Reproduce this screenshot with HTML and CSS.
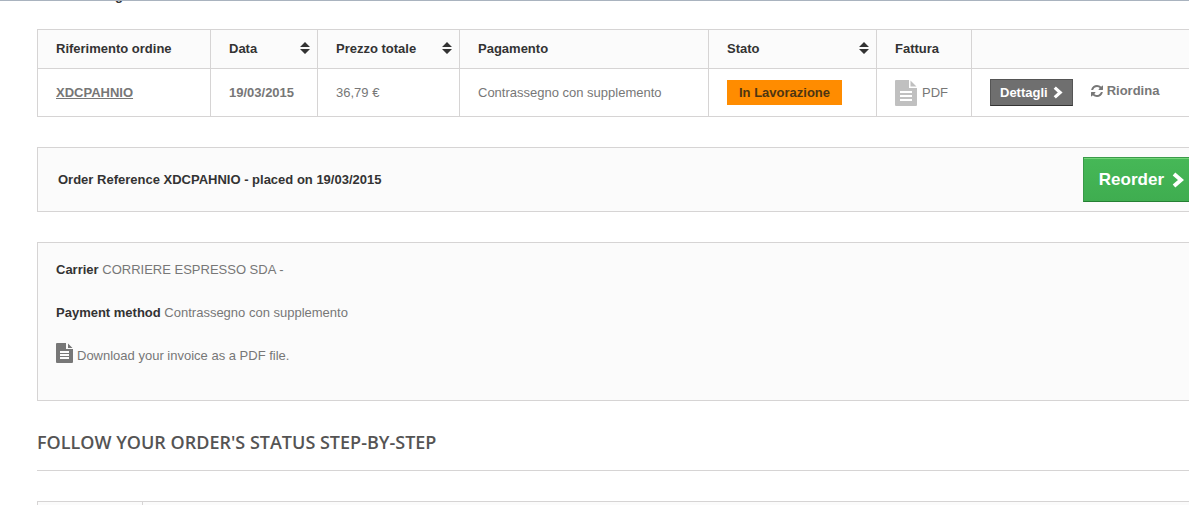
FILE: index.html
```
<!DOCTYPE html>
<html lang="it">
<head>
    <meta charset="UTF-8">
    <meta name="viewport" content="width=device-width, initial-scale=1.0">
    <title>Storico ordini</title>
    <link rel="stylesheet" href="styles.css">
</head>
<body>

    <div class="top-text">g</div>

    <main class="page">
        <table class="order-list">
            <colgroup>
                <col class="col-reference">
                <col class="col-date">
                <col class="col-price">
                <col class="col-payment">
                <col class="col-state">
                <col class="col-invoice">
                <col>
            </colgroup>
            <thead>
                <tr>
                    <th>Riferimento ordine</th>
                    <th><div class="sortable">Data <svg class="sort-icon" viewBox="0 0 10 12"><path d="M5 0 10 5H0zM0 7h10L5 12z"/></svg></div></th>
                    <th><div class="sortable">Prezzo totale <svg class="sort-icon" viewBox="0 0 10 12"><path d="M5 0 10 5H0zM0 7h10L5 12z"/></svg></div></th>
                    <th>Pagamento</th>
                    <th><div class="sortable">Stato <svg class="sort-icon" viewBox="0 0 10 12"><path d="M5 0 10 5H0zM0 7h10L5 12z"/></svg></div></th>
                    <th>Fattura</th>
                    <th></th>
                </tr>
            </thead>
            <tbody>
                <tr>
                    <td><a class="order-link" href="#">XDCPAHNIO</a></td>
                    <td class="bold">19/03/2015</td>
                    <td>36,79 €</td>
                    <td>Contrassegno con supplemento</td>
                    <td><span class="label">In Lavorazione</span></td>
                    <td>
                        <a class="pdf-link" href="#">
                            <svg class="file-icon-large" viewBox="0 0 22 26"><path fill-rule="evenodd" d="M1 0H14V8H22V25Q22 26 21 26H1Q0 26 0 25V1Q0 0 1 0zM5 11V13H17V11zM5 15V17H17V15zM5 19V21H17V19zM15.500 0.500 21.500 6.500H15.500z"/></svg>
                            PDF
                        </a>
                    </td>
                    <td>
                        <div class="actions">
                            <button type="button" class="details-btn">Dettagli
                                <svg class="chevron-small" viewBox="0 0 9 12"><path d="M1.500 1.500 6.500 6 1.500 10.500"/></svg>
                            </button>
                            <a class="reorder-link" href="#">
                                <svg class="refresh-icon" viewBox="0 0 1536 1536"><path d="M1511 928q0 5-1 7-64 268-268 434.500T764 1536q-146 0-282.500-55T238 1324l-129 129q-19 19-45 19t-45-19-19-45V960q0-26 19-45t45-19h448q26 0 45 19t19 45-19 45l-137 137q71 66 161 102t187 36q134 0 250-65t186-179q11-17 53-117 8-23 30-23h192q13 0 22.500 9.500t9.500 22.500zm25-800v448q0 26-19 45t-45 19h-448q-26 0-45-19t-19-45 19-45l138-138Q969 256 768 256q-134 0-250 65T332 500q-11 17-53 117-8 23-30 23H50q-13 0-22.500-9.500T18 608v-7q65-268 270-434.500T768 0q146 0 284 55.500T1297 212l130-129q19-19 45-19t45 19 19 45z"/></svg>
                                Riordina
                            </a>
                        </div>
                    </td>
                </tr>
            </tbody>
        </table>

        <section class="box reorder-box">
            <p class="dark">Order Reference XDCPAHNIO - placed on 19/03/2015</p>
            <button type="button" class="reorder-btn">Reorder
                <svg class="chevron-large" viewBox="0 0 12 16"><path d="M2 2 9 8 2 14"/></svg>
            </button>
        </section>

        <section class="box info-box">
            <p><strong class="dark">Carrier</strong> CORRIERE ESPRESSO SDA -</p>
            <p><strong class="dark">Payment method</strong> Contrassegno con supplemento</p>
            <p>
                <a class="invoice-link" href="#">
                    <svg class="file-icon" viewBox="0 0 17 20"><path fill-rule="evenodd" d="M1 0H10V6H17V19Q17 20 16 20H1Q0 20 0 19V1Q0 0 1 0zM4 8V10H13V8zM4 11V13H13V11zM4 14V16H13V14zM12 0.500 16.500 5H12z"/></svg>
                    Download your invoice as a PDF file.
                </a>
            </p>
        </section>

        <h1>Follow your order's status step-by-step</h1>

        <table class="step-list">
            <tr>
                <th class="step-date"></th>
                <th></th>
            </tr>
        </table>
    </main>

</body>
</html>
```
FILE: styles.css
```
body {
    margin: 0;
    border-top: 1px solid #a9b3bf;
    background: #fff;
    color: #777;
    font: 13px/18px "Liberation Sans", Arial, sans-serif;
}
p {
    margin: 0;
}
a {
    color: #777;
    text-decoration: none;
}
svg {
    flex: none;
    fill: currentColor;
}
button {
    font-family: inherit;
    font-weight: bold;
    color: #fff;
    cursor: pointer;
}
.page {
    padding-left: 37px;
}
/* tail of the line scrolled under the top edge */
.top-text {
    display: flex;
    align-items: flex-end;
    height: 2px;
    margin-bottom: 26px;
    padding-left: 115px;
    overflow: hidden;
    color: #333;
    font-weight: bold;
    line-height: 14px;
}
.dark {
    color: #333;
    font-weight: bold;
}
.bold {
    font-weight: bold;
}

/* Orders table */
table {
    width: 100%;
    table-layout: fixed;
    border-spacing: 0;
    border-top: 1px solid #d6d4d4;
}
th,
td {
    box-sizing: border-box;
    padding: 0 0 0 18px;
    border-left: 1px solid #d6d4d4;
    text-align: left;
}
th {
    background: #fbfbfb;
    color: #333;
}
.order-list {
    margin-bottom: 30px;
}
.order-list th,
.order-list td {
    border-bottom: 1px solid #d6d4d4;
}
.order-list th {
    height: 39px;
}
.order-list td {
    height: 48px;
}
.col-reference {
    width: 173px;
}
.col-date {
    width: 107px;
}
.col-price {
    width: 142px;
}
.col-payment {
    width: 249px;
}
.col-state {
    width: 168px;
}
.col-invoice {
    width: 95px;
}
.sortable {
    display: flex;
    align-items: center;
    justify-content: space-between;
    padding-right: 7px;
}
.sort-icon {
    width: 10px;
    height: 12px;
    padding-bottom: 2px;
}
.order-link {
    font-weight: bold;
    text-decoration: underline;
}
.label {
    display: inline-block;
    padding: 4px 12px;
    background: #ff8c00;
    color: #4d3512;
    font-weight: bold;
    line-height: 17px;
}
.pdf-link {
    display: flex;
    align-items: center;
    gap: 5px;
}
.file-icon-large {
    width: 22px;
    height: 26px;
    color: #c0c0c0;
}
.actions {
    display: flex;
    align-items: center;
    gap: 18px;
}
.details-btn {
    display: flex;
    align-items: center;
    gap: 5px;
    height: 27px;
    padding: 0 9px;
    border: 1px solid #555;
    border-bottom-color: #333;
    background: #6f6f6f;
    font-size: 13px;
}
.chevron-small {
    width: 10px;
    height: 13px;
    fill: none;
    stroke: currentColor;
    stroke-width: 3;
}
.reorder-link {
    display: flex;
    align-items: center;
    gap: 4px;
    padding-bottom: 4px;
    font-weight: bold;
}
.refresh-icon {
    width: 12px;
    height: 12px;
}

/* Boxes */
.box {
    margin-bottom: 30px;
    border: 1px solid #d6d4d4;
    border-right: none;
    background: #fbfbfb;
}
.reorder-box {
    display: flex;
    align-items: center;
    justify-content: space-between;
    padding: 9px 0 9px 20px;
}
.reorder-btn {
    display: flex;
    align-items: center;
    gap: 8px;
    height: 45px;
    padding: 0 5px 0 15px;
    border: 1px solid #399a49;
    border-right: none;
    border-bottom-color: #247f32;
    background: linear-gradient(#46b857, #3fad50);
    box-shadow: inset 0 1px #74d578;
    font-size: 17px;
}
.chevron-large {
    width: 12px;
    height: 16px;
    fill: none;
    stroke: currentColor;
    stroke-width: 4;
}
.info-box {
    padding: 18px;
}
.info-box p {
    margin-bottom: 25px;
}
.info-box p:last-child {
    margin-bottom: 17px;
}
.invoice-link {
    display: flex;
    gap: 4px;
}
.file-icon {
    width: 17px;
    height: 20px;
    margin-top: -4px;
}

h1 {
    margin: 0 0 30px;
    padding-bottom: 17px;
    border-bottom: 1px solid #d6d4d4;
    color: #555454;
    font: 600 18px/22px "Open Sans", sans-serif;
    text-transform: uppercase;
}
.step-list th {
    height: 3px;
}
.step-list .step-date {
    width: 105px;
}
```
